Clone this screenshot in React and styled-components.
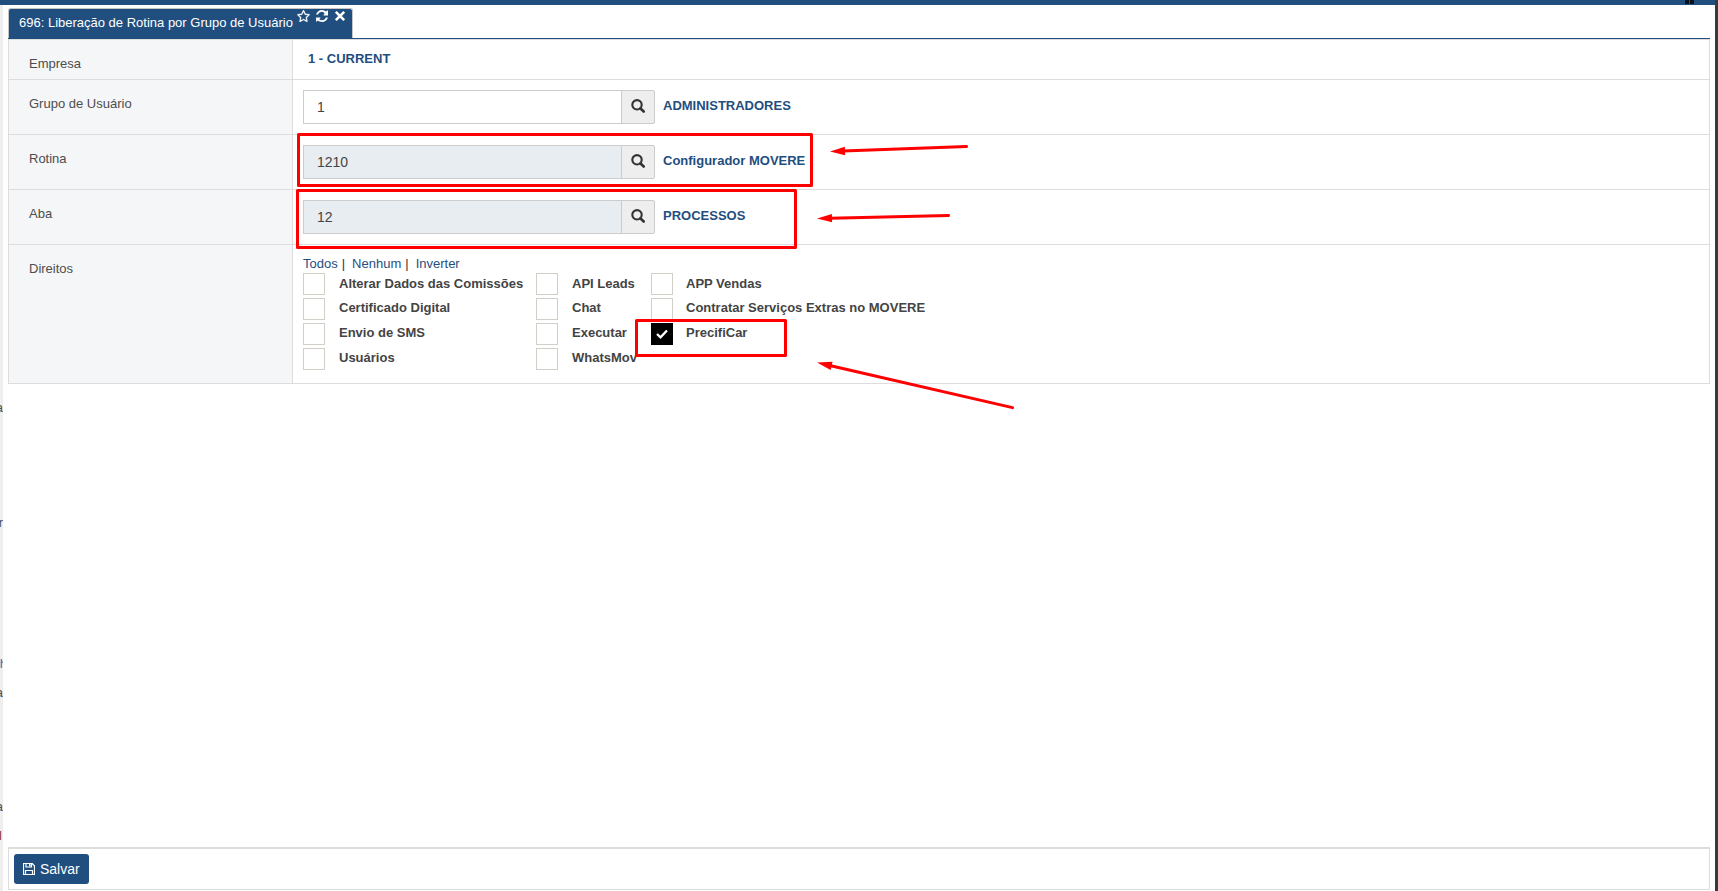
import React, { useState } from "react";
import styled, { createGlobalStyle } from "styled-components";

const GlobalStyle = createGlobalStyle`
  * {
    box-sizing: border-box;
  }
  body {
    margin: 0;
    background: #fff;
    font-family: "Liberation Sans", Arial, sans-serif;
    font-size: 13px;
    color: #4d4d4d;
  }
`;

const Page = styled.div`
  position: relative;
  display: flex;
  flex-direction: column;
  height: 891px;
  overflow: hidden;
`;

const TopBar = styled.div`
  display: flex;
  justify-content: flex-end;
  flex: none;
  height: 5px;
  padding-right: 24px;
  gap: 1px;
  background: #1f4e7f;
`;

const Mark = styled.span`
  width: 4px;
  height: 4px;
  background: #06101a;
`;

const Body = styled.div`
  display: flex;
  flex: 1;
  min-height: 0;
`;

const LeftStrip = styled.div`
  position: relative;
  flex: none;
  width: 3px;
  background: #eee;
  overflow: hidden;
`;

// menu labels behind the window, only their last letter shows
const MenuEnd = styled.span`
  position: absolute;
  right: ${(props) => props.$right || 0}px;
  top: ${(props) => props.$top}px;
  line-height: 16px;
  color: ${(props) => props.$color || "#4d4d4d"};
`;

const RightStrip = styled.div`
  position: absolute;
  top: 0;
  right: 0;
  width: 3px;
  height: 100%;
  background: #3a3a3a;
`;

const Main = styled.div`
  display: flex;
  flex-direction: column;
  flex: 1;
  padding: 3px 8px 1px 5px;
`;

const Tabs = styled.div`
  display: flex;
  flex: none;
  height: 31px;
  border-bottom: 1px solid #1f4e7f;
`;

const Tab = styled.div`
  display: flex;
  width: 345px;
  padding: 0 0 0 10px;
  border: 1px solid #c5c5c5;
  border-bottom: 0;
  border-radius: 3px 3px 0 0;
  background: #1f4e7f;
  color: #fff;
  line-height: 27px;
  white-space: nowrap;
`;

const TabIcons = styled.div`
  display: flex;
  align-items: flex-start;
  gap: 6px;
  padding: 1px 0 0 4px;
`;

const Form = styled.div`
  flex: none;
  border: 1px solid #ddd;
`;

const Row = styled.div`
  display: flex;
  height: ${(props) => props.$height}px;
  border-bottom: 1px solid #ddd;

  &:last-child {
    border-bottom: 0;
  }
`;

const Label = styled.div`
  flex: none;
  width: 284px;
  padding: 16px 0 0 20px;
  border-right: 1px solid #ddd;
  background: #f4f6f8;
  line-height: 16px;
`;

const Field = styled.div`
  display: flex;
  padding: 10px 0 0 10px;
`;

const Company = styled.div`
  padding: 1px 0 0 5px;
  line-height: 16px;
  font-weight: bold;
  color: #1f4e7f;
`;

const Input = styled.input`
  width: 319px;
  height: 34px;
  padding: 0 13px 1px;
  border: 1px solid #ccc;
  border-radius: 0;
  outline: 0;
  background: ${(props) => (props.readOnly ? "#e8edf1" : "#fff")};
  color: #444;
  font: 14px "Liberation Sans", Arial, sans-serif;
`;

const SearchButton = styled.button`
  display: flex;
  align-items: center;
  justify-content: center;
  width: 34px;
  height: 34px;
  margin-left: -1px;
  padding: 0 0 3px 0;
  border: 1px solid #ccc;
  border-radius: 0 2px 2px 0;
  background: #eee;
  color: #333;
`;

const Description = styled.span`
  padding: 8px 0 0 8px;
  line-height: 16px;
  font-weight: bold;
  color: #1f4e7f;
`;

const Rights = styled.div`
  padding: 11px 0 0 10px;
`;

const Links = styled.div`
  display: flex;
  height: 17px;
  line-height: 16px;
  color: #333;
`;

const LinkButton = styled.a`
  margin-right: ${(props) => props.$gap || 0}px;
  color: #1f4e7f;
  cursor: pointer;
`;

const Separator = styled.span`
  margin-right: 7px;
`;

const Options = styled.div`
  display: grid;
  grid-template-columns: 233px 115px 300px;
  grid-auto-rows: 25px;
`;

const Option = styled.label`
  display: flex;
  gap: 14px;
  white-space: nowrap;
  font-weight: bold;
  line-height: 20px;
  color: #444;

  &:nth-child(-n + 3) {
    line-height: 22px;
  }

  &:nth-child(3n) {
    gap: 13px;
  }
`;

const Box = styled.span`
  display: flex;
  align-items: center;
  justify-content: center;
  flex: none;
  width: 22px;
  height: 22px;
  border: 1px solid ${(props) => (props.$checked ? "#000" : "#d2cfc8")};
  background: ${(props) => (props.$checked ? "#000" : "#fff")};
`;

const HiddenCheck = styled.input`
  display: none;
`;

const Footer = styled.div`
  display: flex;
  flex: none;
  height: 43px;
  margin-top: auto;
  padding: 5px;
  border: 1px solid #ddd;
  border-top-width: 2px;
`;

const SaveButton = styled.button`
  display: flex;
  align-items: center;
  gap: 5px;
  width: 75px;
  height: 30px;
  padding: 0 0 0 9px;
  border: 0;
  border-radius: 3px;
  background: #1f4e7f;
  color: #fff;
  font: 14px "Liberation Sans", Arial, sans-serif;
`;

const Annotations = styled.svg`
  position: absolute;
  left: 0;
  top: 0;
  pointer-events: none;
`;

const StarIcon = () => (
  <svg width="13" height="12" viewBox="0 0 1664 1587" fill="currentColor" stroke="currentColor" strokeWidth="40">
    <path d="M1137 1004l306-297-422-62-189-382-189 382-422 62 306 297-73 421 378-199 377 199zm527-357q0 22-26 48l-363 354 86 500q1 7 1 20 0 50-41 50-19 0-40-12l-449-236-449 236q-22 12-40 12-21 0-31.500-14.500t-10.500-35.500q0-6 2-20l86-500-364-354q-25-27-25-48 0-37 56-46l502-73 225-455q19-41 49-41t49 41l225 455 502 73q56 9 56 46z" transform="translate(0 -32)" />
  </svg>
);

const RefreshIcon = () => (
  <svg width="12" height="12" viewBox="0 0 1536 1664" preserveAspectRatio="none" fill="currentColor">
    <path d="M1511 1056q0 5-1 7-64 268-268 434.500T764 1664q-146 0-282.500-55T238 1452l-129 129q-19 19-45 19t-45-19-19-45V1088q0-26 19-45t45-19h448q26 0 45 19t19 45-19 45l-137 137q71 66 161 102t187 36q134 0 250-65t186-179q11-17 53-117 8-23 30-23h192q13 0 22.500 9.500t9.500 22.500zm25-800v448q0 26-19 45t-45 19h-448q-26 0-45-19t-19-45 19-45l138-138Q969 256 768 256q-134 0-250 65T332 500q-11 17-53 117-8 23-30 23H50q-13 0-22.500-9.500T18 608v-7q65-268 270-434.500T768 0q146 0 284 55.500T1297 212l130-129q19-19 45-19t45 19 19 45z" />
  </svg>
);

const CloseIcon = () => (
  <svg width="12" height="12" viewBox="0 0 12 12" fill="none" stroke="currentColor" strokeWidth="2.600">
    <path d="M1.800 1.800l8.400 8.400M10.200 1.800l-8.400 8.400" />
  </svg>
);

const SearchIcon = () => (
  <svg width="14" height="14" viewBox="0 0 14 14" fill="none" stroke="currentColor">
    <circle cx="6" cy="5.800" r="4.700" strokeWidth="2.100" />
    <path d="M9.300 9.300l3.400 3.200" strokeWidth="2.600" strokeLinecap="round" />
  </svg>
);

const CheckIcon = () => (
  <svg width="12" height="10" viewBox="0 0 12 10" fill="none" stroke="#fff" strokeWidth="2.300">
    <path d="M1 5l3.500 3.300L11 1.500" />
  </svg>
);

const SaveIcon = () => (
  <svg width="12" height="12" viewBox="0 0 12 12" fill="none" stroke="currentColor" strokeWidth="1.200">
    <path d="M.5.5h8.700l2.300 2.300v8.700H.5zM3 .5v3.500h5.500V.5M2.500 11.500V7.500h7v4" />
    <path d="M6.800 1v2.500" strokeWidth="1.500" />
  </svg>
);

// the tip is at (x, y), the shaft ends at (tx, ty)
function Arrow({ x, y, tx, ty }) {
  const length = Math.hypot(tx - x, ty - y);
  const angle = (Math.atan2(ty - y, tx - x) * 180) / Math.PI;
  return (
    <g transform={`translate(${x} ${y}) rotate(${angle})`}>
      <path d="M0 0L15-4.200V4.200z" fill="#f00" />
      <path d={`M13 0H${length - 1.5}`} stroke="#f00" strokeWidth="3" strokeLinecap="round" />
    </g>
  );
}

const lookups = [
  { label: "Grupo de Usuário", value: "1", description: "ADMINISTRADORES" },
  { label: "Rotina", value: "1210", description: "Configurador MOVERE", locked: true },
  { label: "Aba", value: "12", description: "PROCESSOS", locked: true },
];

const options = [
  "Alterar Dados das Comissões",
  "API Leads",
  "APP Vendas",
  "Certificado Digital",
  "Chat",
  "Contratar Serviços Extras no MOVERE",
  "Envio de SMS",
  "Executar",
  "PrecifiCar",
  "Usuários",
  "WhatsMov",
];

function App() {
  const [checked, setChecked] = useState(["PrecifiCar"]);

  const toggle = (name) =>
    setChecked((list) =>
      list.includes(name) ? list.filter((n) => n !== name) : [...list, name]
    );

  return (
    <Page>
      <GlobalStyle />
      <TopBar>
        <Mark />
        <Mark />
      </TopBar>
      <Body>
        <LeftStrip>
          <MenuEnd $top={395}>a</MenuEnd>
          <MenuEnd $top={510}>r</MenuEnd>
          <MenuEnd $top={651} $right={-4} $color="#3d72a8">h</MenuEnd>
          <MenuEnd $top={680}>a</MenuEnd>
          <MenuEnd $top={794}>a</MenuEnd>
          <MenuEnd $top={823} $right={1} $color="#8a3a3a">l</MenuEnd>
        </LeftStrip>
        <Main>
          <Tabs>
            <Tab>
              696: Liberação de Rotina por Grupo de Usuário
              <TabIcons>
                <StarIcon />
                <RefreshIcon />
                <CloseIcon />
              </TabIcons>
            </Tab>
          </Tabs>
          <Form>
            <Row $height={40}>
              <Label>Empresa</Label>
              <Field>
                <Company>1 - CURRENT</Company>
              </Field>
            </Row>
            {lookups.map((item) => (
              <Row key={item.label} $height={55}>
                <Label>{item.label}</Label>
                <Field>
                  <Input defaultValue={item.value} readOnly={item.locked} />
                  <SearchButton>
                    <SearchIcon />
                  </SearchButton>
                  <Description>{item.description}</Description>
                </Field>
              </Row>
            ))}
            <Row $height={138}>
              <Label>Direitos</Label>
              <Rights>
                <Links>
                  <LinkButton $gap={4} onClick={() => setChecked(options)}>Todos</LinkButton>
                  <Separator>|</Separator>
                  <LinkButton $gap={4} onClick={() => setChecked([])}>Nenhum</LinkButton>
                  <Separator>|</Separator>
                  <LinkButton
                    onClick={() => setChecked(options.filter((n) => !checked.includes(n)))}
                  >
                    Inverter
                  </LinkButton>
                </Links>
                <Options>
                  {options.map((name) => (
                    <Option key={name}>
                      <HiddenCheck
                        type="checkbox"
                        checked={checked.includes(name)}
                        onChange={() => toggle(name)}
                      />
                      <Box $checked={checked.includes(name)}>
                        {checked.includes(name) && <CheckIcon />}
                      </Box>
                      {name}
                    </Option>
                  ))}
                </Options>
              </Rights>
            </Row>
          </Form>
          <Footer>
            <SaveButton>
              <SaveIcon />
              Salvar
            </SaveButton>
          </Footer>
        </Main>
      </Body>
      <RightStrip />
      <Annotations width="1718" height="891">
        <g fill="none" stroke="#f00" strokeWidth="3" strokeLinejoin="round">
          <rect x="298.5" y="134.500" width="513" height="51" />
          <rect x="297.500" y="190.500" width="498" height="57" />
          <rect x="636.500" y="320.500" width="149" height="35" />
        </g>
        <Arrow x={830} y={151.5} tx={968} ty={146.5} />
        <Arrow x={817} y={218.5} tx={950} ty={215.5} />
        <Arrow x={817} y={362.5} tx={1014} ty={408} />
      </Annotations>
    </Page>
  );
}

export default App;
